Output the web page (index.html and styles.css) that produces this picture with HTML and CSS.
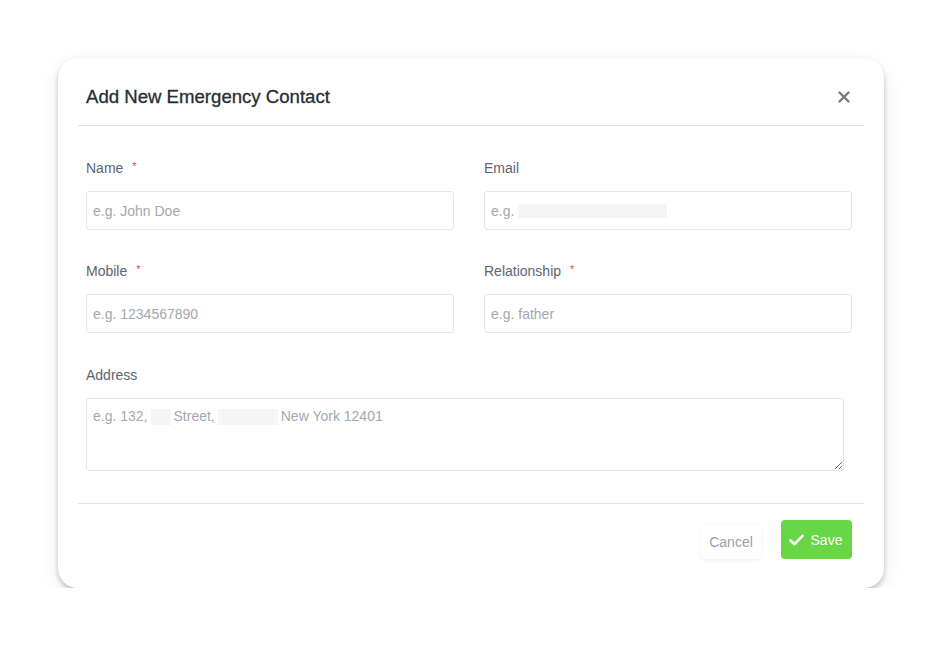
FILE: index.html
```html
<!DOCTYPE html>
<html lang="en">
<head>
<meta charset="utf-8">
<title>Add New Emergency Contact</title>
<link rel="stylesheet" href="styles.css">
</head>
<body>
<div class="modal">
  <div class="modal-header">
    <h2 class="title">Add New Emergency Contact</h2>
    <button class="close" aria-label="Close">
      <svg width="12" height="12" viewBox="0 0 12 12"><path d="M1.5 1.5 L10.5 10.5 M10.5 1.5 L1.5 10.5" stroke="#7a7a7a" stroke-width="2.4" stroke-linecap="round"/></svg>
    </button>
  </div>
  <div class="modal-body">
    <div class="grid">
      <div class="field">
        <label class="label">Name <span class="req">*</span></label>
        <input class="input" type="text" placeholder="e.g. John Doe">
      </div>
      <div class="field">
        <label class="label">Email</label>
        <div class="input-wrap">
          <input class="input" type="text">
          <div class="ph"><span>e.g.</span><span class="redact redact-email"></span></div>
        </div>
      </div>
      <div class="field">
        <label class="label">Mobile <span class="req">*</span></label>
        <input class="input" type="text" placeholder="e.g. 1234567890">
      </div>
      <div class="field">
        <label class="label">Relationship <span class="req">*</span></label>
        <input class="input" type="text" placeholder="e.g. father">
      </div>
      <div class="field full">
        <label class="label">Address</label>
        <div class="input-wrap area-wrap">
          <textarea class="input area"></textarea>
          <div class="ph ph-area"><span>e.g. 132,</span><span class="redact redact-s"></span><span>Street,</span><span class="redact redact-l"></span><span>New York 12401</span></div>
        </div>
      </div>
    </div>
  </div>
  <div class="modal-footer">
    <button class="btn btn-cancel">Cancel</button>
    <button class="btn btn-save">
      <svg width="15" height="12" viewBox="0 0 15 12"><path d="M1.5 6.5 L5.5 10.2 L13.5 1.8" fill="none" stroke="#fff" stroke-width="2.6" stroke-linecap="round" stroke-linejoin="round"/></svg>
      <span>Save</span>
    </button>
  </div>
</div>
</body>
</html>
```
FILE: styles.css
```css
* { box-sizing: border-box; }
html, body { margin: 0; padding: 0; background: #ffffff; }
body {
  font-family: "Liberation Sans", Arial, sans-serif;
  padding: 58px 58px 0 58px;
}
.modal {
  width: 826px;
  height: 530px;
  background: #fff;
  border-radius: 20px;
  box-shadow: 0 3px 5px rgba(0,0,0,0.22), 0 6px 28px rgba(0,0,0,0.07);
  padding: 0 20px;
  display: flex;
  flex-direction: column;
}
.modal-header {
  height: 68px;
  border-bottom: 1px solid #e3e3e3;
  display: flex;
  align-items: center;
  justify-content: space-between;
  padding: 10px 14px 0 8px;
}
.title {
  margin: 0;
  font-size: 18.6px;
  font-weight: 500;
  color: #262d36;
  -webkit-text-stroke: 0.3px #262d36;
}
.close {
  border: 0;
  background: none;
  padding: 0;
  width: 12px;
  height: 12px;
  display: flex;
  cursor: pointer;
}
.modal-body {
  padding: 32px 12px 32px 8px;
}
.grid {
  display: grid;
  grid-template-columns: 368px 368px;
  column-gap: 30px;
  row-gap: 31px;
}
.field { display: flex; flex-direction: column; }
.field.full { grid-column: 1 / span 2; margin-top: 1px; }
.label {
  font-size: 14px;
  line-height: 20px;
  height: 20px;
  color: #5e6470;
  margin-bottom: 13px;
}
.req { color: #e5484d; font-size: 11px; line-height: 0; margin-left: 5px; position: relative; top: -3px; }
.input {
  width: 100%;
  height: 39px;
  border: 1px solid #e6e6e8;
  border-radius: 3px;
  padding: 0 6px;
  font-family: "Liberation Sans", Arial, sans-serif;
  font-size: 14px;
  color: #333;
  background: #fff;
  outline: none;
  display: block;
}
.input::placeholder { color: #a3a7af; }
.input-wrap { position: relative; }
.ph {
  position: absolute;
  left: 7px;
  top: 0;
  height: 39px;
  display: flex;
  align-items: center;
  gap: 4px;
  font-size: 14px;
  color: #a3a7af;
  pointer-events: none;
}
.redact { display: inline-block; height: 14px; background: #f5f5f6; }
.redact-email { width: 149px; }
.area-wrap { width: 758px; }
.area {
  height: 73px;
  resize: vertical;
  padding: 10px 6px;
}
.ph-area { top: 10px; height: 18px; align-items: flex-start; gap: 3px; }
.ph-area .redact { height: 16px; margin-top: 1px; }
.redact-s { width: 20px; }
.redact-l { width: 60px; }
.modal-footer {
  border-top: 1px solid #e3e3e3;
  display: flex;
  justify-content: flex-end;
  align-items: flex-end;
  gap: 20px;
  padding: 16px 12px 0 0;
}
.btn {
  font-family: "Liberation Sans", Arial, sans-serif;
  font-size: 14px;
  border: 0;
  border-radius: 4px;
  cursor: pointer;
}
.btn-cancel {
  width: 60px;
  height: 34px;
  background: #fff;
  color: #9aa0aa;
  box-shadow: 0 1px 4px rgba(0,0,0,0.07);
}
.btn-save {
  width: 71px;
  height: 39px;
  background: #68d747;
  color: #fff;
  display: flex;
  align-items: center;
  justify-content: center;
  gap: 7px;
  padding: 0 2px 0 0;
}
```
